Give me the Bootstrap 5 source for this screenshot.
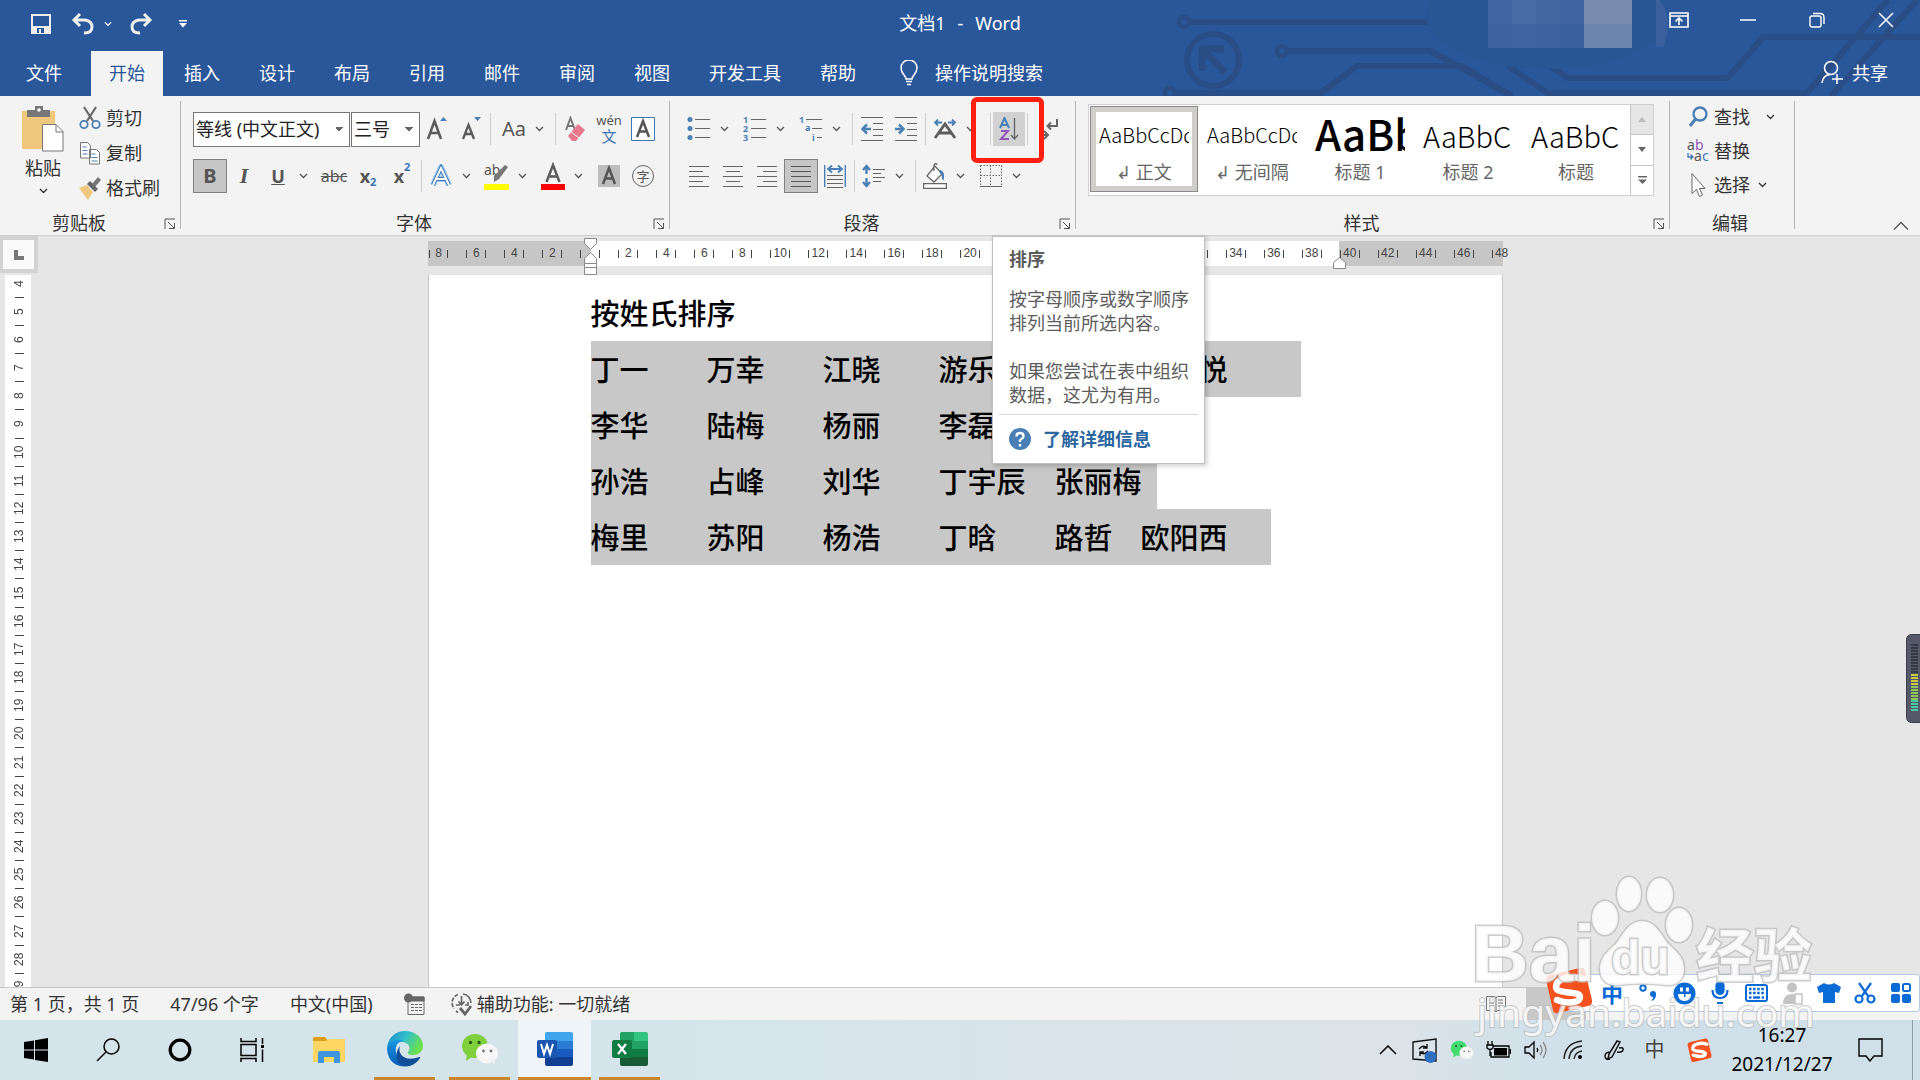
<!DOCTYPE html>
<html lang="zh-CN">
<head>
<meta charset="utf-8">
<meta name="viewport" content="width=device-width, initial-scale=1">
<title>文档1 - Word</title>
<link rel="stylesheet" href="https://cdn.jsdelivr.net/npm/bootstrap@5.3.0/dist/css/bootstrap.min.css">
<style>
:root{--blue:#2a579a;--circuit:#2a4d85;--ui:#f3f3f3;--ink:#333;--acc:#3c76b3}
body{font-family:"Noto Sans","Noto Sans CJK SC",sans-serif;font-size:18px;line-height:24px;color:var(--ink);background:#e6e6e6;height:100vh;overflow:hidden}
button{background:none;border:0;padding:0;color:inherit;display:inline-flex;align-items:center;justify-content:center;white-space:nowrap}
svg{display:block;flex:none}
a{text-decoration:none}
/* title bar */
.hdr{background:var(--blue);color:#fff;overflow:hidden}
.circuit{position:absolute;right:0;top:0}
.capbar{height:51px}
.capside{flex:1 1 0}
.captitle{line-height:46px;gap:12px}
.capbtn{width:69px;height:40px}
.qa{width:34px;height:48px}
.qa.slim{width:16px}
.tabs{height:45px;padding-left:8px}
.rtab{padding:0 18px 2px;height:45px;color:#fff;margin-right:3px;display:flex;align-items:center}
.rtab.first{margin-right:11px}
.rtab.active{background:var(--ui);color:var(--blue)}
/* ribbon */
.ribbon{background:var(--ui);height:140px;border-bottom:1px solid #cfcdcb}
.grp{padding:16px 10px 0 12px;position:relative;height:134px}
.grp::after{content:"";position:absolute;right:0;top:5px;height:128px;width:1px;background:#b5b5b5}
.grp.para{padding-right:12px}
.grp.styles{padding-right:16px}
.grp.edit{width:125px;padding:9px 0 0 16px}
.tools{height:34px;color:#555}
.tools+.tools{margin-top:13px}
.ib{width:34px;height:34px}
.ib.on{background:#c6c6c6;border:1px solid #808080}
.dd{width:22px;height:34px;justify-content:flex-start;padding-left:4px}
.sp{width:5px;display:flex;justify-content:center}
.sp::after{content:"";width:1px;height:32px;background:#cfcfcf}
.big-t{font-size:20px}
.ital{font:italic bold 22px "Liberation Serif",serif}
.abc{font-size:16px}
.idx{color:var(--acc);font-size:11px}
sub.idx{bottom:-6px}
sup.idx{top:-9px}
.wen{font-size:13px;line-height:14px}
.wen span+span{color:var(--acc);font-size:15px;line-height:18px}
.combo{appearance:none;height:35px;border:1px solid #777;border-radius:0;color:#222;padding:0 20px 0 2px;font-size:18px;background-color:#fff;background-repeat:no-repeat;
 background-image:linear-gradient(45deg,transparent 50%,#666 50%),linear-gradient(-45deg,transparent 50%,#666 50%);background-size:4px 4px;background-position:right 10px center,right 6px center}
.combo.face{width:157px}
.combo.size{width:69px;margin-left:1px}
.grplabel{position:absolute;left:0;right:5px;bottom:-5px;height:24px;display:flex;align-items:center}
.grplabel span{flex:1;text-align:center}
.grplabel svg{margin:2px 0 0 6px}
.clip{width:181px;padding-left:20px;padding-top:10px}
.paste{width:46px}
.stack button{height:24px;margin-bottom:11px;justify-content:flex-start}
.edit .stack button{margin-bottom:10px}
.sortbox{position:relative}
.sortbox .ib{background:#d2d2d2;width:32px}
.mark-red{position:absolute;left:-22px;top:-15px;width:73px;height:66px;border:5px solid #ff2010;border-radius:6px;z-index:5;pointer-events:none}
.tip{position:absolute;left:-1px;top:124px;width:213px;background:#fff;border:1px solid #bebebe;box-shadow:2px 2px 5px rgba(0,0,0,.2);z-index:6;color:#5c5c5c;padding:10px 6px 0;height:228px}
.tip strong,.tip p{display:block;padding:0 10px;margin:0;white-space:nowrap}
.tip strong{margin-bottom:16px}
.tip p+p{margin-top:24px}
.tip .more{border-top:1px solid #d8d8d8;margin-top:7px;padding:12px 10px;color:#2b669f;font-weight:700;display:flex;align-items:center;gap:12px}
/* style gallery */
.gal{height:92px;border:1px solid #cfcfcf;background:#fff;width:566px;margin-top:-8px;padding:1px 0 0 1px}
.sty{width:108px;height:86px;flex-direction:column;overflow:hidden;border:0;justify-content:flex-start;color:#666}
.sty.on{border:6px solid #d0cecb;outline:1px solid #8a8a8a;outline-offset:-1px}
.smp{font-family:"Noto Sans CJK SC",sans-serif;color:#000;width:90px;height:54px;line-height:58px;overflow:hidden;text-align:left;font-size:20px;flex:none;font-weight:300}
.sty.on .smp{margin-top:-6px}
.smp.h2s{font-size:29px}
.smp.h1s{font-size:42px;font-weight:500;line-height:54px}
.scr{width:23px;border-left:1px solid #c6c6c6;margin:-1px 0 0 auto}
.scr button{flex:1;border-bottom:1px solid #c6c6c6}
.scr button:first-child{background:#e6e6e6}
.scr button:last-child{border:0}
.fold{width:22px;height:12px}
/* work area */
main{min-height:0}
.corner{width:38px;height:37px;background:#d2d2d2;padding:4px 3px}
.corner button{width:31px;height:29px;background:#fafafa}
.vr-strip{width:26px;margin:2px 0 0 5px;background:#fff;flex:1;overflow:hidden;min-height:0;font:12px/12px "Liberation Sans",sans-serif;color:#444}
.vr-strip div{height:28px;display:flex;flex-direction:column;align-items:center;padding-left:2px}
.vr-strip div:first-child{margin-top:-5px}
.vr-strip span{flex:1;writing-mode:vertical-rl;transform:rotate(180deg);text-align:center}
.vr-strip i{width:9px;height:1px;background:#444}
.vr-strip div:nth-child(6n){height:29px}
.canvas{padding-right:28px}
.paper-w{width:1075px;max-width:100%}
.hruler{height:25px;margin-top:5px;background:linear-gradient(90deg,#c6c6c6 163px,#fff 163px,#fff 911px,#c6c6c6 911px);font:12px/25px "Liberation Sans",sans-serif;color:#444;position:relative;padding:0 11px 0 1px}
.hruler div{flex:1 1 0;width:0;position:relative;display:flex;align-items:center;justify-content:center;white-space:nowrap;padding-left:1px}
.hruler div::before{content:"";position:absolute;left:0;top:9px;height:8px;width:1px;background:#444}
.hruler div:last-of-type{flex:0 0 19px;margin-right:-19px;width:19px}
.mk{position:absolute}
.mk-l{left:155px;top:-3px}.mk-r{left:904px;top:15px}
.paper{background:#fff;border:1px solid #c6c6c6;border-width:0 1px;margin-top:9px;padding:10px 0 0 162px;font-family:"Noto Sans CJK SC",sans-serif;font-weight:500;font-size:29px;line-height:54px;color:#000;overflow:hidden}
.heading{height:56px}
.selrow{background:#c8c8c8;display:flex;width:max-content;height:56px}
.selrow span{width:116px}
.selrow .gap5{width:144px}
.selrow .tail,.selrow .end{width:102px}
.selrow .surname{width:86px}
.selrow .mid{width:50px}
.selrow .wide{width:130px}
.volume{position:absolute;right:0;top:634px}
/* status bar and task bar */
.status{height:33px;background:var(--ui);border-top:1px solid #c6c6c6;padding-left:10px;white-space:nowrap;line-height:32px}
.status span{margin-right:31px}
.proof{margin-right:26px}
.viewbtn{width:60px;height:32px;background:#c8c8c8;margin:0 334px 0 20px}
.taskbar{height:60px;background:linear-gradient(90deg,#d3e4ea,#d6e4ec 40%,#dbe3e8 73%,#d1e0e9 80%,#cfe0e8);color:#000}
.tk{width:72px;height:60px}
.tk.files{padding-left:10px}
.app{width:61px;height:60px;margin-left:14px;border-bottom:3px solid #c9862c}
.app.front{width:73px;background:#eff4f8;margin:0 8px}
.tray{gap:12px}
.tray button{width:25px;height:60px}
.tray .ime-zh{font-size:20px;color:#444}
.wx{filter:hue-rotate(35deg)}
.clock{font-size:19px;line-height:29px;text-align:center;width:106px;margin-left:5px}
.tray .note{margin:0 29px 0 11px}
.peek{width:8px;height:60px;border-left:1px solid #8f9da5}
/* input method bar */
.ime{position:absolute;right:0;bottom:68px;height:38px;width:366px;background:#fff;border:1px solid #b4c9e6;border-radius:3px;z-index:7;padding-left:44px;justify-content:space-between;padding-right:5px;color:#0b6bd6}
.ime button{width:26px;height:36px}
.ime .zh{font-size:22px}
.ime .off{color:#c4c4c4}
.ime .slogo{position:absolute;left:-10px;top:-8px}
.wm{position:absolute;right:94px;bottom:40px;z-index:8;pointer-events:none}
.wm g{paint-order:stroke}
</style>
<script src="https://cdn.jsdelivr.net/npm/bootstrap@5.3.0/dist/js/bootstrap.bundle.min.js"></script>
</head>
<body class="d-flex flex-column position-relative">
<svg width="0" height="0" class="position-absolute"><defs>
<symbol id="chev" viewBox="0 0 9 6"><path d="M1 1l3.500 3.500L8 1" fill="none" stroke="currentColor" stroke-width="1.300"/></symbol>
<symbol id="launch" viewBox="0 0 12 12"><path d="M1 11V1h10M4 4l6 6M10.500 5v5.500H5" fill="none" stroke="#555"/></symbol>
<symbol id="wechat" viewBox="0 0 38 32"><ellipse cx="14" cy="13" rx="13" ry="12" fill="#7fd03c"/><path d="M6 20l-1 8 7-5z" fill="#7fd03c"/><circle cx="9.500" cy="9.500" r="1.700" fill="#2b5a16"/><circle cx="18" cy="9.500" r="1.700" fill="#2b5a16"/><ellipse cx="26" cy="20.500" rx="11" ry="10" fill="#f6f6f6"/><path d="M29 28l5 4 0-7z" fill="#eee"/><circle cx="22.500" cy="18" r="1.400" fill="#777"/><circle cx="30" cy="18" r="1.400" fill="#777"/></symbol>
<symbol id="sogou" viewBox="0 0 48 48"><path d="M5 8Q1 9 1 13L8 43q1 4 5 3l30-7q5-1 4-6L40 4q-1-4-5-3z" fill="#f4511e"/><path d="M38 12C27 8 11 11 11 20c0 8 24 3 24 10 0 6-13 7-23 3" fill="none" stroke="#fff" stroke-width="6.500" stroke-linecap="round"/></symbol>
</defs></svg>

<header class="hdr position-relative flex-shrink-0">
 <svg class="circuit" width="760" height="96" viewBox="1160 0 760 96" fill="none">
  <g stroke="#2a4d85" stroke-width="6" stroke-linejoin="round">
   <circle cx="1184" cy="22" r="5" stroke-width="4.500"/><path d="M1190 22H1430"/>
   <circle cx="1213" cy="60" r="26" stroke-width="6"/><path d="M1202 71V49h22M1204 51l21 21" stroke-width="7" stroke-linejoin="miter"/>
   <circle cx="1282" cy="51" r="5" stroke-width="4.500"/><path d="M1289 51H1430L1512 96"/>
   <circle cx="1170" cy="93" r="5" stroke-width="4.500"/><path d="M1177 93h144l36-27h105l50 30"/>
   <path d="M1508 66l40 27h259L1888 0M1550 66l18 12h160l35-41h157M1831 96L1917 0"/>
  </g>
  <ellipse cx="1547" cy="16" rx="121" ry="53" fill="#295694"/>
  <path d="M1488 0h24v48h-24z" fill="#4165a1"/><path d="M1512 0h24v48h-24z" fill="#486ba5"/><path d="M1536 0h24v48h-24z" fill="#4467a2"/><path d="M1560 0h24v48h-24z" fill="#3f62a0"/><path d="M1488 24h96v24h-96z" fill="#3c619e" opacity=".7"/><path d="M1584 0h48v24h-48z" fill="#778bae"/><path d="M1584 24h48v24h-48z" fill="#6d85ad"/><path d="M1656 0h4q8 12 8 25-1 12-4 22h-8z" fill="#3b609d"/>
 </svg>
 <div class="capbar d-flex align-items-start position-relative">
  <div class="capside d-flex">
   <button class="qa ms-4 me-2" aria-label="保存"><svg width="20" height="20" viewBox="0 0 20 20"><path d="M1 1h18v18H1z" fill="none" stroke="#eee" stroke-width="2"/><path d="M1 12h18v7H1z" fill="#eee"/><path d="M6 14h7v5H6z" fill="#2a579a"/><path d="M8 15h2v4H8z" fill="#eee"/></svg></button>
   <button class="qa" aria-label="撤消"><svg width="24" height="22" viewBox="0 0 24 22" fill="none" stroke="#eee" stroke-width="3"><path d="M9 1L3 7l6 6M3 7h11q7 1 7 7 0 6-8 6"/></svg></button>
   <button class="qa slim" aria-label="撤消列表"><svg width="8" height="6"><use href="#chev"/></svg></button>
   <button class="qa ms-2" aria-label="恢复"><svg width="24" height="22" viewBox="0 0 24 22" fill="none" stroke="#eee" stroke-width="3"><path d="M15 1l6 6-6 6M21 7H10q-7 1-7 7 0 6 8 6"/></svg></button>
   <button class="qa ms-2" aria-label="自定义快速访问工具栏"><svg width="8" height="8" viewBox="0 0 8 8"><path d="M0 0h8v1.500H0zM0 3h8L4 7.500z" fill="#fff"/></svg></button>
  </div>
  <div class="captitle d-flex"><span>文档1</span><span>-</span><span>Word</span></div>
  <div class="capside d-flex justify-content-end">
   <button class="capbtn" aria-label="功能区显示选项"><svg width="20" height="16" viewBox="0 0 20 16" fill="none" stroke="#fff" stroke-width="1.600"><path d="M1 1h18v14H1zM1 4h18M10 13V6M6.500 9.500L10 6l3.500 3.500"/></svg></button>
   <button class="capbtn" aria-label="最小化"><svg width="16" height="16"><path d="M0 8h16" stroke="#fff" stroke-width="1.500"/></svg></button>
   <button class="capbtn" aria-label="还原"><svg width="16" height="16" viewBox="0 0 16 16" fill="none" stroke="#fff" stroke-width="1.400"><rect x="1" y="4" width="11" height="11" rx="2"/><path d="M4 1.500h7q4 0 4 4V12"/></svg></button>
   <button class="capbtn" aria-label="关闭"><svg width="16" height="16"><path d="M1 1l14 14M15 1L1 15" stroke="#fff" stroke-width="1.500"/></svg></button>
  </div>
 </div>
 <nav class="tabs d-flex position-relative">
  <a href="#" class="rtab first">文件</a><a href="#" class="rtab active" aria-current="page">开始</a><a href="#" class="rtab">插入</a><a href="#" class="rtab">设计</a><a href="#" class="rtab">布局</a><a href="#" class="rtab">引用</a><a href="#" class="rtab">邮件</a><a href="#" class="rtab">审阅</a><a href="#" class="rtab">视图</a><a href="#" class="rtab">开发工具</a><a href="#" class="rtab">帮助</a>
  <a href="#" class="rtab ms-1"><svg class="me-3" width="20" height="26" viewBox="0 0 20 26" fill="none" stroke="#fff" stroke-width="1.500"><path d="M7 19c0-4-5-5-5-11a8 8 0 0116 0c0 6-5 7-5 11zM7 21.500h6M8 24.500h4"/></svg>操作说明搜索</a>
  <a href="#" class="rtab ms-auto me-3 pe-3"><svg class="me-2" width="23" height="25" viewBox="0 0 23 25" fill="none" stroke="#fff" stroke-width="1.500"><circle cx="10" cy="8" r="6.500"/><path d="M1 23q1-8 8-8.500M16 14v10M11 19h11"/></svg>共享</a>
 </nav>
</header>

<section class="ribbon d-flex flex-shrink-0" aria-label="功能区">
 <div class="grp clip d-flex">
  <button class="paste flex-column align-self-start"><svg width="42" height="46" viewBox="0 0 42 46"><path d="M0 5h33v38H0z" fill="#efc87e"/><path d="M5 4h8V0h8v4h7v7H5z" fill="#777"/><circle cx="17" cy="4" r="1.800" fill="#fff"/><path d="M20.500 18.500H34l7 7V45H20.500z" fill="#fff" stroke="#777"/><path d="M34 18.500V26h7" fill="none" stroke="#777"/></svg><span class="mt-1">粘贴</span><svg class="mt-2" width="9" height="6"><use href="#chev"/></svg></button>
  <div class="stack d-flex flex-column ms-2 ps-1">
   <button><svg class="me-1" width="24" height="24" viewBox="0 0 24 24" fill="none" stroke="#666" stroke-width="2.200"><path d="M6 1l9 14M18 1L9 15"/><g stroke="#4a7fb5" stroke-width="1.800"><circle cx="6" cy="18.500" r="3.700"/><circle cx="18" cy="18.500" r="3.700"/></g></svg>剪切</button>
   <button><svg class="me-1" width="24" height="24" viewBox="0 0 24 24" fill="#fff" stroke="#777"><path d="M2.500 1.500h7l3 3V17h-10zM11.500 8.500h7l3 3V23h-10z"/><path d="M4.500 6h4M4.500 9.500h5M4.500 13h5M13.500 13h4M13.500 16.500h6M13.500 20h6" stroke="#4a7fb5"/></svg>复制</button>
   <button><svg class="me-1" width="24" height="24" viewBox="0 0 24 24"><path d="M1 12l8-3 6 7-5 8z" fill="#efc87e"/><path d="M9 8l3-3 8 8-3 3z" fill="#666"/><path d="M14 8l6-7 3 3-6 7z" fill="#777"/></svg>格式刷</button>
  </div>
  <div class="grplabel"><span>剪贴板</span><svg width="12" height="12"><use href="#launch"/></svg></div>
 </div>

 <div class="grp">
  <div class="tools d-flex align-items-center">
   <select class="combo face" aria-label="字体"><option>等线 (中文正文)</option></select><select class="combo size" aria-label="字号"><option>三号</option></select>
   <button class="ib" aria-label="增大字号"><svg width="22" height="26" viewBox="0 0 22 26"><path d="M2 23L8.500 5 15 23M4.500 17h8" fill="none" stroke="#5c5c5c" stroke-width="2.500"/><path d="M14 5l3.500-4L21 5z" fill="#4a7fb5"/></svg></button>
   <button class="ib" aria-label="减小字号"><svg width="22" height="26" viewBox="0 0 22 26"><path d="M3 23L8.500 9 14 23M5 18h7" fill="none" stroke="#5c5c5c" stroke-width="2.300"/><path d="M14 1l3.500 4L21 1z" fill="#4a7fb5"/></svg></button>
   <i class="sp"></i><button class="ib ms-1 big-t">Aa</button><button class="dd" aria-label="更改大小写"><svg width="9" height="6"><use href="#chev"/></svg></button><i class="sp"></i>
   <button class="ib" aria-label="清除格式"><svg width="22" height="26" viewBox="0 0 22 26"><path d="M2 14L6.500 2 11 14M3.500 10h6" fill="none" stroke="#777" stroke-width="2"/><path d="M4 20L14 8l7 6-9 11H8z" fill="#e8788c"/><path d="M7 16l8 6" stroke="#f3f3f3"/></svg></button>
   <button class="ib flex-column wen"><span>wén</span><span>文</span></button>
   <button class="ib" aria-label="字符边框"><svg width="24" height="24" viewBox="0 0 24 24"><path d="M.5.5h23v23H.5z" fill="#fff" stroke="#3c76b3"/><path d="M6 20l6-16 6 16M8 14.500h8" fill="none" stroke="#555" stroke-width="2.500"/></svg></button>
  </div>
  <div class="tools d-flex align-items-center">
   <button class="ib on fw-bold big-t">B</button>
   <button class="ib ital">I</button>
   <button class="ib text-decoration-underline fw-bold">U</button><button class="dd" aria-label="下划线"><svg width="9" height="6"><use href="#chev"/></svg></button>
   <button class="ib text-decoration-line-through abc">abc</button>
   <button class="ib fw-bold">x<sub class="idx">2</sub></button>
   <button class="ib fw-bold">x<sup class="idx">2</sup></button>
   <i class="sp"></i>
   <button class="ib" aria-label="文本效果"><svg width="22" height="24" viewBox="0 0 22 24"><path d="M3 21L11 3l8 18M6 15h10" fill="none" stroke="#a9cdf2" stroke-width="6" stroke-linejoin="round"/><path d="M3 21L11 4l8 17M6 15h10" fill="none" stroke="#3c76b3" stroke-width="4"/><path d="M3 21L11 4l8 17M6 15h10" fill="none" stroke="#fff" stroke-width="2"/></svg></button><button class="dd" aria-label="文本效果列表"><svg width="9" height="6"><use href="#chev"/></svg></button>
   <button class="ib" aria-label="突出显示"><svg width="26" height="28" viewBox="0 0 26 28"><text x="0" y="13" font-size="14" fill="#555">ab</text><path d="M10 14L21 3l3 2-9 12-5 3z" fill="#777"/><path d="M0 22h25v6H0z" fill="#ff0"/></svg></button><button class="dd" aria-label="突出显示颜色"><svg width="9" height="6"><use href="#chev"/></svg></button>
   <button class="ib" aria-label="字体颜色"><svg width="24" height="28" viewBox="0 0 24 28"><path d="M5.500 20L12 3l6.500 17M8 14.500h8" fill="none" stroke="#5c5c5c" stroke-width="2.500"/><path d="M0 22h24v6H0z" fill="red"/></svg></button><button class="dd" aria-label="字体颜色列表"><svg width="9" height="6"><use href="#chev"/></svg></button>
   <button class="ib" aria-label="字符底纹"><svg width="22" height="22" viewBox="0 0 22 22"><path d="M0 0h22v22H0z" fill="#bdbdbd"/><path d="M5 19l6-16 6 16M7 13.500h8" fill="none" stroke="#555" stroke-width="2.500"/></svg></button>
   <button class="ib" aria-label="带圈字符"><svg width="24" height="24" viewBox="0 0 24 24"><circle cx="12" cy="12" r="10.500" fill="none" stroke="#666"/><text x="5.500" y="17" font-size="13" fill="#555">字</text></svg></button>
  </div>
  <div class="grplabel"><span>字体</span><svg width="12" height="12"><use href="#launch"/></svg></div>
 </div>

 <div class="grp para">
  <div class="tools d-flex align-items-center">
   <button class="ib" aria-label="项目符号"><svg width="24" height="24" viewBox="0 0 24 24"><g fill="#4a7fb5"><circle cx="3" cy="2.500" r="2.500"/><circle cx="3" cy="11.500" r="2.500"/><circle cx="3" cy="20.500" r="2.500"/></g><path d="M8 2.500h15M8 11.500h15M8 20.500h15" stroke="#666"/></svg></button><button class="dd" aria-label="项目符号库"><svg width="9" height="6"><use href="#chev"/></svg></button>
   <button class="ib" aria-label="编号"><svg width="24" height="26" viewBox="0 0 24 26"><g fill="#4a7fb5" font-size="9" font-weight="700"><text x="0" y="7">1</text><text x="0" y="16">2</text><text x="0" y="25">3</text></g><path d="M8 3.500h15M8 12.500h15M8 21.500h15" stroke="#666"/></svg></button><button class="dd" aria-label="编号库"><svg width="9" height="6"><use href="#chev"/></svg></button>
   <button class="ib" aria-label="多级列表"><svg width="24" height="26" viewBox="0 0 24 26"><g fill="#4a7fb5" font-size="9" font-weight="700"><text x="0" y="7">1</text><text x="6" y="15">a</text><text x="13" y="25">i</text></g><path d="M7 3.500h16M13 12.500h10M18 21.500h5" stroke="#666"/></svg></button><button class="dd" aria-label="多级列表库"><svg width="9" height="6"><use href="#chev"/></svg></button>
   <i class="sp"></i>
   <button class="ib" aria-label="减少缩进量"><svg width="24" height="24" viewBox="0 0 24 24"><path d="M1 .5h22M13 6.500h10M13 12.500h10M13 18.500h10M1 23.500h22" stroke="#666"/><path d="M11 12H3M7 7.500L2.500 12 7 16.500" fill="none" stroke="#4a7fb5" stroke-width="2.500"/></svg></button>
   <button class="ib" aria-label="增加缩进量"><svg width="24" height="24" viewBox="0 0 24 24"><path d="M1 .5h22M13 6.500h10M13 12.500h10M13 18.500h10M1 23.500h22" stroke="#666"/><path d="M1 12h8M5 7.500L9.500 12 5 16.500" fill="none" stroke="#4a7fb5" stroke-width="2.500"/></svg></button>
   <i class="sp"></i>
   <button class="ib" aria-label="中文版式"><svg width="24" height="20" viewBox="0 0 24 20"><path d="M2 19L12 5l10 14M6 14h12" fill="none" stroke="#5c5c5c" stroke-width="2.800"/><path d="M9 3.500H2M5 .5l-3 3 3 3M15 3.500h7M19 .5l3 3-3 3" fill="none" stroke="#4a7fb5" stroke-width="1.800"/></svg></button><button class="dd" aria-label="中文版式列表"><svg width="9" height="6"><use href="#chev"/></svg></button>
   <i class="sp ms-1"></i>
   <div class="sortbox">
    <button class="ib" aria-label="排序" aria-describedby="sort-tip"><svg width="20" height="24" viewBox="0 0 20 24" fill="none"><path d="M1 11L5.500 1 10 11M3 8h5" stroke="#4a7fb5" stroke-width="2"/><path d="M2 14h7L2 22h8" stroke="#9057b5" stroke-width="2"/><path d="M15.500 1v21M12 18l3.500 4 3.500-4" stroke="#666" stroke-width="1.400"/></svg></button>
    <div class="mark-red"></div>
    <div class="tip" id="sort-tip" role="tooltip"><strong>排序</strong><p>按字母顺序或数字顺序<br>排列当前所选内容。</p><p>如果您尝试在表中组织<br>数据，这尤为有用。</p><a class="more" href="#"><svg width="22" height="22" viewBox="0 0 22 22"><circle cx="11" cy="11" r="11" fill="#4a7fb5"/><path d="M7.500 8.500Q7.500 5 11 5t3.500 3.200Q14.500 10 12.500 11T11 14M11 16v2.500" fill="none" stroke="#fff" stroke-width="2.400"/></svg>了解详细信息</a></div>
   </div>
   <i class="sp"></i>
   <button class="ib" aria-label="显示编辑标记"><svg width="24" height="24" viewBox="0 0 24 24" fill="none" stroke="#666" stroke-width="2"><path d="M22 2v7h-9M16 5.500L12.500 9l3.500 3.500M5 18h7M9 14l4 4-4 4"/></svg></button>
  </div>
  <div class="tools d-flex align-items-center">
   <button class="ib" aria-label="左对齐"><svg width="20" height="22"><path d="M0 1.500h20M0 6.500h14M0 11.500h20M0 16.500h14M0 21.500h20" stroke="#666"/></svg></button>
   <button class="ib" aria-label="居中"><svg width="20" height="22"><path d="M0 1.500h20M3 6.500h14M0 11.500h20M3 16.500h14M0 21.500h20" stroke="#666"/></svg></button>
   <button class="ib" aria-label="右对齐"><svg width="20" height="22"><path d="M0 1.500h20M6 6.500h14M0 11.500h20M6 16.500h14M0 21.500h20" stroke="#666"/></svg></button>
   <button class="ib on" aria-label="两端对齐"><svg width="20" height="22"><path d="M0 1.500h20M0 6.500h20M0 11.500h20M0 16.500h20M0 21.500h20" stroke="#555"/></svg></button>
   <button class="ib" aria-label="分散对齐"><svg width="22" height="24" viewBox="0 0 22 24"><path d="M.5 1v22M21.500 1v22M5 5h12M8 1.500L4 5l4 3.500M14 1.500L18 5l-4 3.500" fill="none" stroke="#4a7fb5" stroke-width="1.800"/><path d="M3 11.500h16M3 15.500h16M3 19.500h16M3 23.500h16" stroke="#666"/></svg></button>
   <i class="sp"></i>
   <button class="ib" aria-label="行距"><svg width="24" height="24" viewBox="0 0 24 24"><path d="M4.500 2v8M1 6l3.500-4L8 6M4.500 22v-8M1 18l3.500 4L8 18" fill="none" stroke="#4a7fb5" stroke-width="2.300"/><path d="M11 5.500h12M11 9.500h8M11 13.500h12M11 17.500h8" stroke="#666"/></svg></button><button class="dd" aria-label="行距列表"><svg width="9" height="6"><use href="#chev"/></svg></button>
   <i class="sp"></i>
   <button class="ib" aria-label="底纹"><svg width="24" height="26" viewBox="0 0 24 26" fill="#fff" stroke="#666" stroke-width="1.300"><path d="M4 13l8-10 7 8-8 8zM11 8V2q2-3 3 0"/><path d="M17 7q5 1 4 9-1 3-2-1 0-4-3-6z" fill="#4a7fb5" stroke="none"/><path d="M.6 20.600h22.800v4.800H.6z"/></svg></button><button class="dd" aria-label="底纹颜色"><svg width="9" height="6"><use href="#chev"/></svg></button>
   <button class="ib" aria-label="边框"><svg width="22" height="22" viewBox="0 0 22 22" fill="none" stroke="#666"><path d="M.5.500h21M.5 10.500h21M.5.500v21M10.500.500v21M21.500.500v21" stroke-dasharray="1.500 1.500"/><path d="M0 21.500h22"/></svg></button><button class="dd" aria-label="边框列表"><svg width="9" height="6"><use href="#chev"/></svg></button>
  </div>
  <div class="grplabel"><span>段落</span><svg width="12" height="12"><use href="#launch"/></svg></div>
 </div>

 <div class="grp styles">
  <div class="gal d-flex">
   <button class="sty on"><span class="smp">AaBbCcDd</span><span>↲ 正文</span></button>
   <button class="sty"><span class="smp">AaBbCcDd</span><span>↲ 无间隔</span></button>
   <button class="sty"><span class="smp h1s">AaBb</span><span>标题 1</span></button>
   <button class="sty"><span class="smp h2s">AaBbC</span><span>标题 2</span></button>
   <button class="sty"><span class="smp h2s">AaBbC</span><span>标题</span></button>
   <div class="scr d-flex flex-column">
    <button aria-label="上一行"><svg width="8" height="5"><path d="M0 5l4-5 4 5z" fill="#bbb"/></svg></button>
    <button aria-label="下一行"><svg width="8" height="5"><path d="M0 0l4 5 4-5z" fill="#666"/></svg></button>
    <button aria-label="其他"><svg width="9" height="8"><path d="M0 0h9v1.500H0zM0 3.500h9L4.500 8z" fill="#666"/></svg></button>
   </div>
  </div>
  <div class="grplabel"><span>样式</span><svg width="12" height="12"><use href="#launch"/></svg></div>
 </div>

 <div class="grp edit">
  <div class="stack d-flex flex-column">
   <button><svg class="me-1" width="24" height="24" viewBox="0 0 24 24" fill="none" stroke="#4a7fb5"><circle cx="14" cy="9" r="6.500" stroke-width="2.300"/><path d="M9.500 14L4 21" stroke-width="3"/></svg>查找<svg class="ms-3" width="9" height="6"><use href="#chev"/></svg></button>
   <button><svg class="me-1" width="24" height="24" viewBox="0 0 24 24" font-size="14"><text x="1" y="11" fill="#555">a</text><text x="9" y="11" fill="#9057b5">b</text><text x="8" y="22" fill="#555">a</text><text x="16" y="22" fill="#3c76b3">c</text><path d="M2 14v4h5M4.500 15.500L7 18l-2.500 2.500" fill="none" stroke="#3c76b3" stroke-width="1.300"/></svg>替换</button>
   <button><svg class="me-1" width="24" height="24" viewBox="0 0 24 24"><path d="M6 .5v20l4.500-4 3 7 3-1.500-3-6.500h5.500z" fill="#fff" stroke="#666"/></svg>选择<svg class="ms-2" width="9" height="6"><use href="#chev"/></svg></button>
  </div>
  <div class="grplabel"><span>编辑</span></div>
 </div>
 <button class="fold ms-auto align-self-end me-2 mb-1" aria-label="折叠功能区"><svg width="16" height="9"><path d="M1 8.500L8 1.500l7 7" fill="none" stroke="#555" stroke-width="1.400"/></svg></button>
</section>

<main class="d-flex flex-fill">
 <aside class="d-flex flex-column">
  <div class="corner flex-shrink-0"><button aria-label="制表符"><svg width="10" height="10"><path d="M0 0h4v6h6v4H0z" fill="#777"/></svg></button></div>
  <div class="vr-strip" id="vruler"></div>
 </aside>
 <div class="canvas flex-fill d-flex flex-column align-items-center">
  <div class="hruler paper-w d-flex flex-shrink-0" id="hruler">
   <svg class="mk mk-l" width="15" height="38" viewBox="0 0 15 38" fill="#fff" stroke="#888"><path d="M1.500.500h12v5l-6 6-6-6zM1.500 25.500v-5l6-6 6 6v5zM1.500 29.500h12v7h-12z"/><path d="M1.500 25.500v4h12v-4z"/></svg>
   <svg class="mk mk-r" width="15" height="14" viewBox="0 0 15 14" fill="#fff" stroke="#888"><path d="M1.500 12.500v-6l6-5 6 5v6z"/></svg>
  </div>
  <article class="paper paper-w flex-fill">
   <div class="heading">按姓氏排序</div>
   <div class="selrow"><span>丁一</span><span>万幸</span><span>江晓</span><span>游乐</span><span class="gap5"></span><span class="tail">悦</span></div>
   <div class="selrow"><span>李华</span><span>陆梅</span><span>杨丽</span><span>李磊</span><span class="mid"></span></div>
   <div class="selrow"><span>孙浩</span><span>占峰</span><span>刘华</span><span>丁宇辰</span><span class="end">张丽梅</span></div>
   <div class="selrow"><span>梅里</span><span>苏阳</span><span>杨浩</span><span>丁晗</span><span class="surname">路哲</span><span class="wide">欧阳西</span></div>
  </article>
 </div>
</main>
<svg class="volume" width="14" height="90" viewBox="0 0 14 90"><rect x=".5" y=".5" width="20" height="88" rx="5" fill="#555967" stroke="#3c3f4b"/><g stroke-width="7" stroke-dasharray="2 1"><path d="M8.500 10v30" stroke="#363943"/><path d="M8.500 40v12" stroke="#c9c64a"/><path d="M8.500 52v14" stroke="#8fc65c"/><path d="M8.500 66v12" stroke="#4dc6a6"/></g></svg>

<footer class="flex-shrink-0">
 <div class="status d-flex align-items-center">
  <span>第 1 页，共 1 页</span><span>47/96 个字</span><span>中文(中国)</span>
  <svg class="proof" width="21" height="22" viewBox="0 0 21 22" fill="none" stroke="#666"><path d="M4 7v14.500h16V4H9"/><path d="M8 4h12v4H8z" fill="#666"/><path d="M7 11.500h11M7 14.500h11M7 17.500h11" stroke-dasharray="3 1"/><circle cx="4.500" cy="5" r="4.500" fill="#666" stroke="none"/></svg>
  <svg class="me-1" width="22" height="24" viewBox="0 0 22 24" fill="none" stroke="#666" stroke-width="1.700"><path d="M7 2.500A9 9 0 003 16.500" stroke-dasharray="4 1.500"/><path d="M12 2q7 1 8 9M5 19l2 1.500M10.500 4v8M7.500 9.500l3 3.500 3-3.500M5 13h4M17 10v3h-3"/><path d="M9 16l5 6 6-8" stroke-width="2.800"/></svg>
  <span>辅助功能: 一切就绪</span>
  <svg class="ms-auto" width="20" height="18" viewBox="0 0 20 18" fill="none" stroke="#777"><path d="M.5 1.500h8l1.500 1 1.500-1h8v14h-8L10 17l-1.500-1.500h-8zM10 2v15M3 5h5M3 8h5M3 11h5M12 5h5M12 8h5M12 11h5"/></svg>
  <button class="viewbtn" aria-label="页面视图"></button>
 </div>
 <div class="taskbar d-flex align-items-center">
  <button class="tk" aria-label="开始"><svg width="24" height="24"><path d="M0 4l10-1.500V11.500H0zM11 2.300L24 0v11.500H11zM0 12.500h10v9L0 20zM11 12.500h13V24l-13-2z"/></svg></button>
  <button class="tk" aria-label="搜索"><svg width="24" height="24" fill="none" stroke="#000" stroke-width="1.500"><circle cx="15.500" cy="8.500" r="7.500"/><path d="M10 14L1 23"/></svg></button>
  <button class="tk" aria-label="Cortana"><svg width="24" height="24"><circle cx="12" cy="12" r="9.800" fill="none" stroke="#000" stroke-width="3.200"/></svg></button>
  <button class="tk" aria-label="任务视图"><svg width="24" height="24" fill="none" stroke="#000" stroke-width="1.500"><path d="M1 0v3.500h15V0M1 6.500h15v11H1zM1 24v-3.500h15V24M22.500 0v6M22.500 11.500V24"/><path d="M22.500 7v3" stroke-width="3"/></svg></button>
  <button class="tk files" aria-label="文件资源管理器"><svg width="34" height="28" viewBox="0 0 34 28"><path d="M1 3q0-2 2-2h10l3 4H1z" fill="#dd9c15"/><path d="M1 5h13l3-2h16v23H1z" fill="#ffd663"/><path d="M6 27V17q0-2 2-2h18q2 0 2 2v10h-6v-6H12v6z" fill="#3f96dc"/></svg></button>
  <button class="app" aria-label="Edge"><svg width="38" height="36" viewBox="0 0 38 36"><defs><linearGradient id="ea" x1="0" y1="0" x2="1" y2=".4"><stop offset="0" stop-color="#1687d0"/><stop offset=".55" stop-color="#35c1c8"/><stop offset="1" stop-color="#6adf50"/></linearGradient><linearGradient id="eb" x1="0" y1="0" x2="0" y2="1"><stop offset="0" stop-color="#1597e2"/><stop offset="1" stop-color="#0a5bb8"/></linearGradient></defs><path d="M1 17C2 6 10 0 19 0c11 0 18 7 18 15 0 6-5 9-10 9-4 0-6-1-5-3 3-3 2-10-7-10C8 11 2 13 1 19z" fill="url(#ea)"/><path d="M1 18c2-8 10-11 16-8-6 1-8 6-7 11 2 9 10 13 18 12-4 3-25 7-27-15z" fill="url(#eb)"/><path d="M14 15c-3 9 6 16 19 11 1 0 2 0 1 1-5 8-13 9-17 8C9 32 9 20 14 15z" fill="#134f98"/></svg></button>
  <button class="app" aria-label="微信"><svg width="38" height="32"><use href="#wechat"/></svg></button>
  <button class="app front" aria-label="Word"><svg width="36" height="34" viewBox="0 0 36 34"><path d="M8 2q0-2 2-2h24q2 0 2 2v7H8z" fill="#41a5ee"/><path d="M8 9h28v8H8z" fill="#2b7cd3"/><path d="M8 17h28v8H8z" fill="#185abd"/><path d="M8 25h28v7q0 2-2 2H10q-2 0-2-2z" fill="#103f91"/><rect y="8" width="20" height="18" rx="2" fill="#1a56b0"/><path d="M4 12l3 10 3-9 3 9 3-10" fill="none" stroke="#fff" stroke-width="2"/></svg></button>
  <button class="app ms-0" aria-label="Excel"><svg width="36" height="34" viewBox="0 0 36 34"><path d="M8 2q0-2 2-2h12v17H8z" fill="#21a366"/><path d="M22 0h12q2 0 2 2v7H22z" fill="#33c481"/><path d="M22 9h14v8H22z" fill="#21a366"/><path d="M8 17h14v8H8z" fill="#107c41"/><path d="M22 17h14v8H22z" fill="#107c41"/><path d="M8 25h28v7q0 2-2 2H10q-2 0-2-2z" fill="#185c37"/><rect y="8" width="20" height="18" rx="2" fill="#107c41"/><path d="M6 12l8 10M14 12L6 22" fill="none" stroke="#fff" stroke-width="2.200"/></svg></button>
  <div class="tray d-flex align-items-center ms-auto">
   <button aria-label="显示隐藏的图标"><svg width="18" height="10"><path d="M1 9l8-8 8 8" fill="none" stroke="#000" stroke-width="1.500"/></svg></button>
   <button aria-label="同步"><svg width="25" height="25" viewBox="0 0 25 25" fill="none" stroke="#111" stroke-width="1.400"><path d="M1 4l23-3v22L1 21zM7 11q4-5 8-1M15 6v4h-4M16 13q-4 5-8 1M8 18v-4h4"/><circle cx="18.500" cy="19" r="6" fill="#2f6fc0" stroke="none"/></svg></button>
   <button aria-label="微信"><svg class="wx" width="24" height="20"><use href="#wechat"/></svg></button>
   <button aria-label="电池"><svg width="25" height="20" viewBox="0 0 25 20"><path d="M7 6h16v11H5v-5" fill="none" stroke="#000" stroke-width="1.300"/><path d="M8 8h13v7.500H8zM23.500 9H25v5h-1.500z"/><path d="M2 1v4M6 1v4M1 5h6v3q-3 3-6 0zM4 10v6" fill="none" stroke="#000" stroke-width="1.300"/></svg></button>
   <button aria-label="音量"><svg width="24" height="20" viewBox="0 0 24 20" fill="none" stroke="#000" stroke-width="1.300"><path d="M1 7h4l5-5v16l-5-5H1zM13 8q1.500 2 0 4"/><path d="M16 5q4 5 0 10M19 2q6 8 0 16" stroke="#888"/></svg></button>
   <button aria-label="网络"><svg width="20" height="20" viewBox="0 0 20 20" fill="none" stroke="#222" stroke-width="1.400"><path d="M1 19Q2 3 19 1M6 19Q7 7 19 6M11 19q1-7 8-8"/><circle cx="17" cy="17" r="2" fill="#000" stroke="none"/></svg></button>
   <button class="ms-1" aria-label="手写笔"><svg width="22" height="22" viewBox="0 0 22 22" fill="none" stroke="#111" stroke-width="1.500"><path d="M14 2l3 1-8 15-4 2 1-5zM16 9q5-1 4 2t-6 2M8 13q-6 0-6 4t5 3"/></svg></button>
   <button class="ime-zh ms-1">中</button>
   <button class="ms-2" aria-label="搜狗"><svg width="25" height="25"><use href="#sogou"/></svg></button>
   <div class="clock"><div>16:27</div><div>2021/12/27</div></div>
   <button class="note" aria-label="通知"><svg width="25" height="24"><path d="M1 1h23v17h-8l-4 5-4-5H1z" fill="none" stroke="#000" stroke-width="1.400"/></svg></button>
  </div>
  <div class="peek"></div>
 </div>
</footer>

<div class="ime d-flex align-items-center">
 <svg class="slogo" width="48" height="48"><use href="#sogou"/></svg>
 <button class="fw-bold zh">中</button>
 <button aria-label="标点"><svg width="20" height="20" viewBox="0 0 20 20"><circle cx="5" cy="5" r="2.700" fill="none" stroke="currentColor" stroke-width="2"/><circle cx="15" cy="11" r="3" fill="currentColor"/><path d="M18 11q0 6-5 7 3-3 2-7z" fill="currentColor"/></svg></button>
 <button aria-label="表情"><svg width="23" height="23"><circle cx="11.500" cy="11.500" r="11" fill="currentColor"/><path d="M5 12h13q0 7-6.500 7T5 12zM7 5.500h3v4H7zM13 5.500h3v4h-3z" fill="#fff"/><path d="M11 12h1.500v3H11z" fill="currentColor"/></svg></button>
 <button aria-label="语音"><svg width="18" height="24" fill="none" stroke="currentColor" stroke-width="2.200"><rect x="5.500" y="1" width="7" height="12" rx="3.500" fill="currentColor"/><path d="M1.500 9q0 8 7.500 8t7.500-8M6 22h6"/></svg></button>
 <button aria-label="键盘"><svg width="23" height="18"><rect x="1" y="1" width="21" height="16" rx="2" fill="#fff" stroke="currentColor" stroke-width="2"/><path d="M4 5h15M4 9h15" stroke="currentColor" stroke-width="2.500" stroke-dasharray="2.500 1.600"/><path d="M4 13.500h15" stroke="currentColor" stroke-width="2.500" stroke-dasharray="2.500 1.600 7 1.600"/></svg></button>
 <button class="off" aria-label="账户"><svg width="20" height="23"><circle cx="9" cy="5.500" r="5" fill="currentColor"/><path d="M0 22q0-10 9-10t9 10z" fill="currentColor"/><path d="M12 12h7v10h-7z" fill="#fff" stroke="currentColor" stroke-width="1.500"/></svg></button>
 <button aria-label="皮肤"><svg width="24" height="22"><path d="M7 1q5 3 10 0l7 4-2 6-4-1v11H6V10l-4 1L0 5z" fill="currentColor"/></svg></button>
 <button aria-label="截图"><svg width="22" height="22" fill="none" stroke="currentColor" stroke-width="2.200"><path d="M5 1l9 13M17 1L8 14"/><circle cx="5" cy="17" r="3.500"/><circle cx="17" cy="17" r="3.500"/></svg></button>
 <button aria-label="工具箱"><svg width="20" height="20" fill="currentColor"><rect width="9" height="9" rx="2"/><rect y="11" width="9" height="9" rx="2"/><rect x="11" y="11" width="9" height="9" rx="2"/><rect x="12" y="1" width="7" height="7" rx="1.500" fill="none" stroke="currentColor" stroke-width="2"/></svg></button>
</div>

<svg class="wm" width="356" height="170" viewBox="1470 870 356 170" fill="#fff" fill-opacity=".8" stroke="#b8b8b8" stroke-opacity=".7" stroke-width="3">
 <g><ellipse cx="1605" cy="918" rx="13" ry="17"/><ellipse cx="1629" cy="894" rx="12" ry="17"/><ellipse cx="1660" cy="895" rx="13" ry="17"/><ellipse cx="1679" cy="925" rx="13" ry="17"/><path d="M1642 921c-12 0-18 11-24 20-6 8-18 13-18 28 0 12 8 17 18 16 16-2 32-2 48 0 10 1 18-4 18-16 0-15-12-20-18-28-6-9-12-20-24-20z"/>
 <text x="1471" y="981" font-family="Liberation Sans" font-weight="700" font-size="80">Bai</text>
 <text x="1611" y="974" font-family="Liberation Sans" font-weight="700" font-size="48">du</text>
 <text x="1696" y="977" font-family="Noto Sans CJK SC" font-weight="700" font-size="58">经验</text>
 <text x="1477" y="1027" font-family="Noto Sans" font-size="39" stroke-width="2">jingyan.baidu.com</text></g>
</svg>

<script>
// ruler marks: a tick in every cell, a number in every second one
const h=document.getElementById('hruler');
for(let k=-8;k<=48;k++){const d=document.createElement('div');if(k%2===0&&k!==0)d.textContent=Math.abs(k);h.append(d)}
const v=document.getElementById('vruler');
for(let k=4;k<=29;k++){const d=document.createElement('div');d.innerHTML='<span>'+k+'</span><i></i>';v.append(d)}
</script>
</body>
</html>
